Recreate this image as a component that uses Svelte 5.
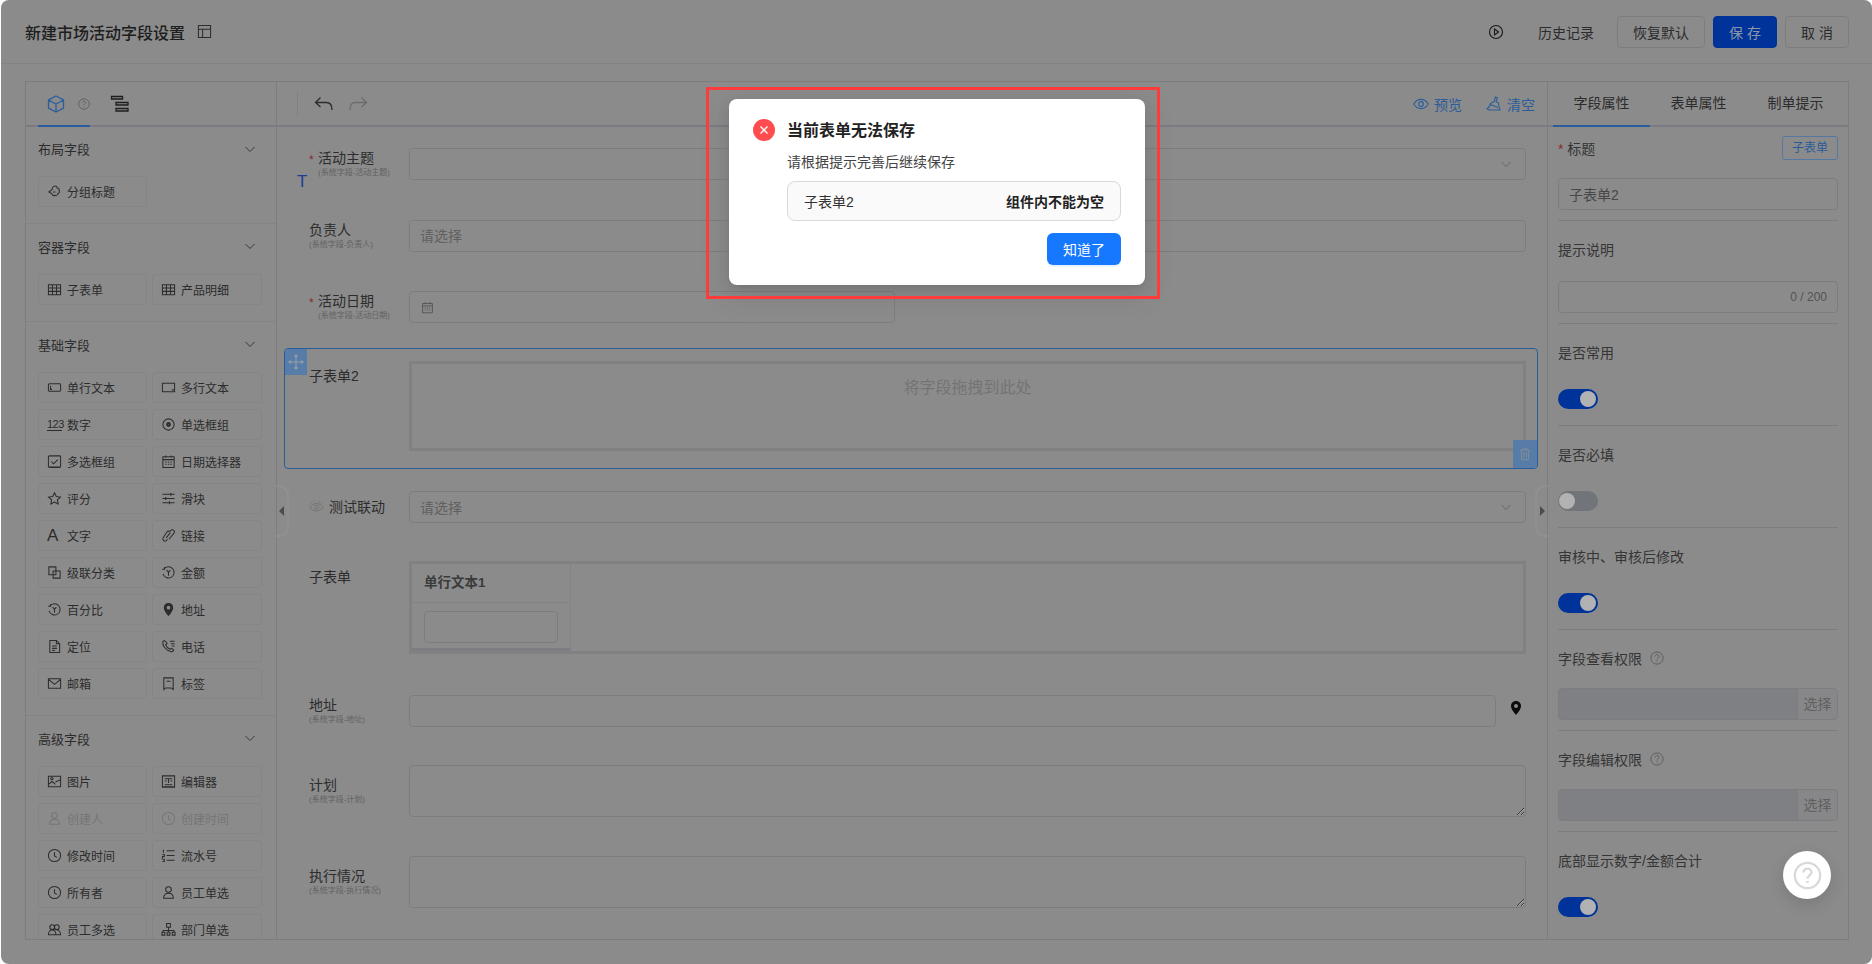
<script>
  const icons = {
    group: 'M8 2.500c1.600-.8 3 .3 2.800 1.800 1.600-.2 2.800 1.200 2 2.700 1 1.200.4 2.900-1.200 3 .1 1.700-1.500 2.800-3 2-1.300 1-2.800.3-3-1.200L2 8.500l3.500-2.700C5.400 4 6.700 2.500 8 2.500zM6.500 8.500h2.500',
    table: 'M1.500 3h13v10.500h-13zM1.500 6.500h13M1.500 10h13M5.800 3v10.500M10.200 3v10.500',
    line: 'M2.500 4h11a1 1 0 0 1 1 1v6a1 1 0 0 1-1 1h-11a1 1 0 0 1-1-1V5a1 1 0 0 1 1-1zM3.800 6v4h1.500',
    multi: 'M1.500 3.500h13v9h-13zM11.500 10.500h1.500v1',
    radio: 'M8 2a6 6 0 1 0 0 12A6 6 0 0 0 8 2zM8 6a2 2 0 1 0 0 4 2 2 0 0 0 0-4z M8 7a1 1 0 1 0 0 2 1 1 0 0 0 0-2z',
    check: 'M2.500 2h11a1 1 0 0 1 1 1v10a1 1 0 0 1-1 1h-11a1 1 0 0 1-1-1V3a1 1 0 0 1 1-1zM4.500 8l2.500 2.500 4.500-4.500M1.500 14.500h13',
    date: 'M2 3h12v11.500H2zM2 6h12M5 1.500V4M11 1.500V4M4.500 8.500h1.500M7.300 8.500h1.500M10 8.500h1.500M4.500 11h1.500M7.300 11h1.500M10 11h1.500',
    star: 'M8 1.800l1.900 4 4.400.6-3.200 3 .8 4.400L8 11.700l-3.900 2.100.8-4.400-3.200-3 4.400-.6z',
    slider: 'M1.500 3.500h13M1.500 8h13M1.500 12.500h13M10.500 2v3M5 6.500v3M9 11v3',
    link: 'M9.500 3.500l1.200-1.200a2.300 2.300 0 0 1 3.200 3.200L8.500 12M6.500 4L2.300 10.500a2.300 2.300 0 0 0 3.400 3L7 12M6.500 4a2 2 0 0 1 3 0M5.500 10.500L10 5',
    cascade: 'M2 2h7.500v8.500H2zM6.500 6.500H14V14H6.500z',
    money: 'M3.200 4.300A6 6 0 1 1 2.200 9.500M1.200 4.500h2.600V2M6 5.500L8 7.800l2-2.300M8 7.800v3.700',
    pin: 'M8 1C5 1 3 3.200 3 6c0 3.500 5 9 5 9s5-5.500 5-9c0-2.800-2-5-5-5zm0 3a2 2 0 1 1 0 4 2 2 0 0 1 0-4z',
    doc: 'M3 1.500h7l3.500 3.500v9.500H3zM10 1.500V5h3.500M5.500 7.500h5M5.500 10h5M5.500 12.300h3',
    phone: 'M2 2.500c-1 4 3 10 9 11 1.500.200 2.300-1 2.500-2L11 10l-1.500 1C7.500 10 5.500 7.500 5 6l1.500-1.500L4 1.800c-1 0-1.800 0-2 .7zM9.500 2.500h5M10.500 5h4M11.500 7.500h3',
    mail: 'M1.500 3h13v10h-13zM1.500 3.500L8 9l6.500-5.500',
    tag: 'M3 2h10v12.500l-2-1.800H5l-2 1.800zM6 5.500h4',
    image: 'M1.500 2.500h13v11h-13zM1.500 11l4-3 3.500 3M9 8.500l5.500-2.500M4 5a1.200 1.200 0 1 0 2.400 0A1.200 1.200 0 0 0 4 5z',
    editor: 'M1.500 2h13v12h-13zM4 5h8M8 5v4.500M4 7.500h2M10 7.500h2M4 11.500h8M1.500 13.500h13',
    user: 'M8 1.800a3 3 0 1 0 0 6 3 3 0 0 0 0-6zM2.800 14.200c0-3.300 2.200-5.500 5.200-5.500s5.200 2.200 5.200 5.500z',
    clock: 'M8 1.500a6.500 6.500 0 1 0 0 13 6.500 6.500 0 0 0 0-13zM8 4.500V8.500l2.500 1.500',
    list: 'M6 3h8.500M6 8h8.500M6 13h8.500M2.500 1.800V5M1.500 7h2v2h-2v2.500M1.500 12h2v2.500h-2',
    users: 'M5.500 3a2.500 2.500 0 1 0 0 5 2.500 2.500 0 0 0 0-5zM10.500 3a2.500 2.500 0 1 0 0 5 2.500 2.500 0 0 0 0-5zM1.500 13.500c0-3 1.800-5 4-5s4 2 4 5zM6.500 13.500h8c0-3-1.800-5-4-5',
    org: 'M6 1.500h4v4H6zM8 5.500V9M2 9h12M2 9v2M14 9v2M8 9v2M1 11h3v3H1zM6.500 11h3v3h-3zM12 11h3v3h-3z'
  }

  const sections = [
    { title: '布局字段', fields: [{ t: '分组标题', i: 'group' }] },
    { title: '容器字段', fields: [{ t: '子表单', i: 'table' }, { t: '产品明细', i: 'table' }] },
    {
      title: '基础字段',
      fields: [
        { t: '单行文本', i: 'line' }, { t: '多行文本', i: 'multi' },
        { t: '数字', label: '123' }, { t: '单选框组', i: 'radio' },
        { t: '多选框组', i: 'check' }, { t: '日期选择器', i: 'date' },
        { t: '评分', i: 'star' }, { t: '滑块', i: 'slider' },
        { t: '文字', label: 'A' }, { t: '链接', i: 'link' },
        { t: '级联分类', i: 'cascade' }, { t: '金额', i: 'money' },
        { t: '百分比', i: 'money' }, { t: '地址', i: 'pin', solid: true },
        { t: '定位', i: 'doc' }, { t: '电话', i: 'phone' },
        { t: '邮箱', i: 'mail' }, { t: '标签', i: 'tag' }
      ]
    },
    {
      title: '高级字段',
      fields: [
        { t: '图片', i: 'image' }, { t: '编辑器', i: 'editor' },
        { t: '创建人', i: 'user', off: true }, { t: '创建时间', i: 'clock', off: true },
        { t: '修改时间', i: 'clock' }, { t: '流水号', i: 'list' },
        { t: '所有者', i: 'clock' }, { t: '员工单选', i: 'user' },
        { t: '员工多选', i: 'users' }, { t: '部门单选', i: 'org' }
      ]
    }
  ]
</script>

{#snippet chevron()}
  <svg class="chev" viewBox="0 0 12 12"><path d="M1.500 4l4.500 4.500L10.500 4" /></svg>
{/snippet}

{#snippet help(cls)}
  <svg class={cls} viewBox="0 0 16 16"><circle cx="8" cy="8" r="7" /><path d="M5.800 6.300c0-1.300 1-2.100 2.200-2.100s2.200.8 2.200 2c0 1.700-2.200 1.700-2.200 3.500M8 11v1.200" /></svg>
{/snippet}

<div class="page">
  <header class="top">
    <h1>新建市场活动字段设置</h1>
    <svg class="ic layout" viewBox="0 0 16 16"><path d="M1.500 1.500h13v13h-13zM1.500 5.500h13M6 5.500v9" /></svg>
    <div class="actions">
      <svg class="ic play" viewBox="0 0 16 16"><circle cx="8" cy="8" r="6.500" /><path d="M6.500 5l4 3-4 3z" /></svg>
      <span class="history">历史记录</span>
      <button class="btn wide">恢复默认</button>
      <button class="btn primary">保 存</button>
      <button class="btn">取 消</button>
    </div>
  </header>

  <div class="workspace">
    <aside class="left">
      <div class="left-tabs">
        <span class="cube-tab">
          <svg class="cube" viewBox="0 0 18 18"><path d="M9 1l7.500 4v8L9 17l-7.500-4V5zM1.500 5L9 9l7.500-4M9 9v8" /></svg>
          {@render help('q-small')}
        </span>
        <svg class="tree" viewBox="0 0 20 18"><path d="M1.500 1.500h11v2.500h-11zM6 7.500h12V10H6zM6 13.500h12V16H6z" /></svg>
      </div>
      {#each sections as s}
        <section class="group">
          <div class="group-head"><span>{s.title}</span>{@render chevron()}</div>
          <div class="chips">
            {#each s.fields as f}
              <div class="chip" class:off={f.off}>
                {#if f.label}
                  <span class="glyph" class:big={f.label === 'A'}>{f.label}</span>
                {:else}
                  <svg class="ic chip-ic" class:solid={f.solid} viewBox="0 0 16 16"><path d={icons[f.i]} /></svg>
                {/if}
                <span>{f.t}</span>
              </div>
            {/each}
          </div>
        </section>
      {/each}
    </aside>

    <main class="center">
      <div class="toolbar">
        <span class="sep"></span>
        <svg class="ic undo" viewBox="0 0 20 16"><path d="M6.500 1.500L1.500 6.500l5 4.500M1.500 6.500h11c3.500 0 5.500 2 5.500 7.500" /></svg>
        <svg class="ic redo" viewBox="0 0 20 16"><path d="M13.500 1.500l5 5-5 4.500M18.500 6.500h-11C4 6.500 2 8.500 2 14" /></svg>
        <span class="tool-link first">
          <svg class="ic" viewBox="0 0 16 16"><path d="M.8 8C2.500 5 5 3.400 8 3.400S13.500 5 15.200 8c-1.700 3-4.200 4.600-7.200 4.600S2.500 11 .8 8zM8 5.600a2.400 2.400 0 1 0 0 4.800 2.400 2.400 0 0 0 0-4.800z" /></svg>
          预览
        </span>
        <span class="tool-link">
          <svg class="ic" viewBox="0 0 16 16"><path d="M9.500 1l2 1-1.500 3.500 2.500 1.500.5 3.500c.2 1.500.5 2.500 1 3.500H4c-1.500-.2-2.800-.8-3-1.500 1.800-.5 2.600-2.200 3.500-5L7 6l1-.2zM4.500 8.500l7.500 3" /></svg>
          清空
        </span>
      </div>

      <div class="form">
        <div class="row r1">
          <span class="stray">T</span>
          <div class="lab req"><b>活动主题</b><small>(系统字段-活动主题)</small></div>
          <div class="ctl select">{@render chevron()}</div>
        </div>
        <div class="row r2">
          <div class="lab"><b>负责人</b><small>(系统字段-负责人)</small></div>
          <input class="ctl" placeholder="请选择" />
        </div>
        <div class="row r3">
          <div class="lab req"><b>活动日期</b><small>(系统字段-活动日期)</small></div>
          <div class="ctl date"><svg class="ic date-ic" viewBox="0 0 16 16"><path d={icons.date} /></svg></div>
        </div>

        <div class="row picked">
          <span class="handle move">
            <svg class="ic" viewBox="0 0 16 16"><path d="M8 1v14M1 8h14M6.500 2.500L8 1l1.500 1.500M6.500 13.500L8 15l1.500-1.500M2.500 6.500L1 8l1.500 1.500M13.500 6.500L15 8l-1.500 1.500" /></svg>
          </span>
          <div class="lab plain"><b>子表单2</b></div>
          <div class="dropzone">将字段拖拽到此处</div>
          <span class="handle trash">
            <svg class="ic" viewBox="0 0 16 16"><path d="M2.500 3.500h11M6 3.500V1.500h4v2M3.500 3.500l.7 11h7.600l.7-11M6.500 6v6M9.500 6v6" /></svg>
          </span>
        </div>

        <div class="row r5">
          <div class="lab plain eye">
            <svg class="ic eye-ic" viewBox="0 0 18 14"><path d="M1 8c2-3 4.800-4.500 8-4.500S15 5 17 8c-2 2.800-4.800 4.200-8 4.200S3 10.800 1 8zM9 5.800a2.200 2.200 0 1 0 0 4.400 2.200 2.200 0 0 0 0-4.400zM3 3.500L2 2M6 2.200L5.500 .8M12 2.200l.5-1.400M15 3.500L16 2" /></svg>
            <b>测试联动</b>
          </div>
          <div class="ctl select holder">请选择{@render chevron()}</div>
        </div>

        <div class="row r6">
          <div class="lab plain"><b>子表单</b></div>
          <div class="subtable">
            <div class="col">
              <div class="col-head">单行文本1</div>
              <div class="col-cell"><input class="ctl" /></div>
            </div>
          </div>
        </div>

        <div class="row r7">
          <div class="lab"><b>地址</b><small>(系统字段-地址)</small></div>
          <input class="ctl" />
          <svg class="ic addr solid" viewBox="0 0 16 16"><path d={icons.pin} /></svg>
        </div>
        <div class="row r8">
          <div class="lab area"><b>计划</b><small>(系统字段-计划)</small></div>
          <textarea class="ctl"></textarea>
        </div>
        <div class="row">
          <div class="lab area"><b>执行情况</b><small>(系统字段-执行情况)</small></div>
          <textarea class="ctl"></textarea>
        </div>
      </div>

      <span class="fold fold-l"><i></i></span>
      <span class="fold fold-r"><i></i></span>
    </main>

    <aside class="right">
      <div class="right-tabs">
        <span class="on">字段属性</span>
        <span>表单属性</span>
        <span>制单提示</span>
      </div>
      <div class="prop first">
        <div class="prop-label between">
          <span><em>*</em> 标题</span>
          <span class="tag">子表单</span>
        </div>
        <input class="ctl" value="子表单2" />
      </div>
      <div class="prop">
        <div class="prop-label">提示说明</div>
        <div class="ctl counter">0 / 200</div>
      </div>
      <div class="prop"><div class="prop-label">是否常用</div><span class="switch on"></span></div>
      <div class="prop"><div class="prop-label">是否必填</div><span class="switch"></span></div>
      <div class="prop"><div class="prop-label">审核中、审核后修改</div><span class="switch on"></span></div>
      <div class="prop perm">
        <div class="prop-label">字段查看权限 {@render help('q-mid')}</div>
        <div class="picker"><span></span><b>选择</b></div>
      </div>
      <div class="prop perm">
        <div class="prop-label">字段编辑权限 {@render help('q-mid')}</div>
        <div class="picker"><span></span><b>选择</b></div>
      </div>
      <div class="prop last"><div class="prop-label">底部显示数字/金额合计</div><span class="switch on"></span></div>
    </aside>
  </div>

  <div class="mask">
    <div class="modal">
      <span class="err">
        <svg viewBox="0 0 22 22"><path d="M7.500 7.500l7 7M14.500 7.500l-7 7" /></svg>
      </span>
      <div class="modal-body">
        <h2>当前表单无法保存</h2>
        <p>请根据提示完善后继续保存</p>
        <div class="issue"><span>子表单2</span><b>组件内不能为空</b></div>
        <div class="modal-foot"><button class="ok">知道了</button></div>
      </div>
    </div>
    <div class="annot"></div>
    <div class="float-help">{@render help('q-big')}</div>
  </div>
</div>

<style>
  :global(body) {
    margin: 0;
    background: #fff;
  }
  .page {
    position: relative;
    height: 964px;
    margin-left: 1px;
    display: flex;
    flex-direction: column;
    overflow: hidden;
    border-radius: 8px;
    background: #c8c8c8;
    color: #3f3f3f;
    font-family: 'Liberation Sans', 'Noto Sans CJK SC', sans-serif;
    font-size: 14px;
  }
  button,
  input,
  textarea {
    font-family: inherit;
  }
  .ic {
    fill: none;
    stroke: currentColor;
    stroke-width: 1.1;
    flex: none;
  }
  .solid {
    fill: currentColor;
    fill-rule: evenodd;
    stroke: none;
  }

  .top {
    height: 63px;
    flex: none;
    display: flex;
    align-items: center;
    padding: 0 23px 0 24px;
    border-bottom: 1px solid #bcbcbc;
  }
  h1 {
    margin: 0;
    font-size: 16px;
    font-weight: 500;
    color: #2c2c2c;
  }
  .layout {
    width: 15px;
    height: 15px;
    margin-left: 12px;
  }
  .actions {
    margin-left: auto;
    display: flex;
    align-items: center;
    gap: 8px;
  }
  .play {
    width: 16px;
    height: 16px;
    margin-right: 26px;
    color: #222;
  }
  .history {
    margin-right: 15px;
  }
  .btn {
    width: 64px;
    height: 32px;
    border: 1px solid #b3b3b3;
    border-radius: 4px;
    background: transparent;
    color: #3f3f3f;
    font-size: 14px;
    padding: 0;
  }
  .btn.wide {
    width: 88px;
  }
  .btn.primary {
    background: #004adc;
    border-color: #004adc;
    color: #c8d8f0;
  }

  .workspace {
    flex: 1;
    min-height: 0;
    display: flex;
    margin: 17px 23px 24px 24px;
    border: 1px solid #b3b3b3;
  }
  .left {
    width: 250px;
    flex: none;
    overflow: hidden;
    border-right: 1px solid #b3b3b3;
  }
  .left-tabs {
    height: 43px;
    display: flex;
    align-items: center;
    padding-left: 12px;
    border-bottom: 2px solid #b0b0be;
    position: relative;
  }
  .cube-tab {
    width: 52px;
    height: 45px;
    margin-bottom: -2px;
    display: flex;
    align-items: center;
    gap: 13px;
    padding-left: 9px;
    box-sizing: border-box;
    border-bottom: 2px solid #3c86e0;
    flex: none;
  }
  .cube {
    width: 18px;
    height: 18px;
    flex: none;
    fill: none;
    stroke: #3c86e0;
    stroke-width: 1.3;
  }
  .q-small {
    width: 12px;
    height: 12px;
    flex: none;
    fill: none;
    stroke: #7d7d7d;
    stroke-width: 1;
  }
  .tree {
    width: 20px;
    height: 18px;
    margin-left: 20px;
    fill: none;
    stroke: #2a2a2a;
    stroke-width: 1.3;
  }
  .group {
    padding: 0 13px 16px 12px;
    border-bottom: 1px solid #bdbdbd;
  }
  .group:last-child {
    border-bottom: 0;
  }
  .group-head {
    height: 43px;
    margin-bottom: 6px;
    display: flex;
    align-items: center;
    justify-content: space-between;
    padding-right: 7px;
    font-size: 13px;
  }
  .group:not(:first-of-type) .group-head {
    height: 44px;
  }
  .chev {
    width: 12px;
    height: 12px;
    fill: none;
    stroke: currentColor;
    stroke-width: 0.9;
    flex: none;
  }
  .chips {
    display: grid;
    grid-template-columns: 109px 110px;
    gap: 6px 5px;
  }
  .chip {
    height: 31px;
    box-sizing: border-box;
    border: 1px solid #bfbfbf;
    border-radius: 3px;
    display: flex;
    align-items: center;
    gap: 5px;
    padding-left: 8px;
    font-size: 12px;
  }
  .chip.off {
    color: #a8a8a8;
  }
  .chip-ic {
    width: 15px;
    height: 15px;
    stroke-width: 1.1;
  }
  .glyph {
    width: 15px;
    flex: none;
    font-size: 11px;
    font-family: 'Liberation Sans Narrow', 'Liberation Sans', sans-serif;
    letter-spacing: -0.5px;
    border-bottom: 1px solid currentColor;
    line-height: 12px;
  }
  .glyph.big {
    border-bottom: 0;
    font-size: 17px;
    letter-spacing: 0;
    line-height: 16px;
  }

  .center {
    flex: 1;
    min-width: 0;
    position: relative;
  }
  .toolbar {
    height: 43px;
    display: flex;
    align-items: center;
    padding: 0 12px 0 20px;
    border-bottom: 2px solid #b0b0be;
  }
  .sep {
    width: 1px;
    height: 25px;
    background: #b8b8b8;
    margin-right: 16px;
  }
  .undo,
  .redo {
    width: 20px;
    height: 16px;
    stroke-width: 1.3;
  }
  .redo {
    margin-left: 14px;
    color: #9a9a9a;
  }
  .tool-link {
    display: flex;
    align-items: center;
    gap: 5px;
    margin-left: 24px;
    font-size: 14px;
    color: #3c86dd;
  }
  .tool-link.first {
    margin-left: auto;
  }
  .tool-link .ic {
    width: 16px;
    height: 16px;
  }

  .form {
    padding: 21px 21px 0 32px;
  }
  .row {
    display: flex;
    margin-bottom: 39px;
    position: relative;
  }
  .r1 { margin-bottom: 40px; }
  .r3 { margin-bottom: 25px; }
  .r5 { margin-bottom: 38px; }
  .r6 { margin-bottom: 41px; }
  .r7 { margin-bottom: 38px; }
  .stray {
    position: absolute;
    left: -12px;
    top: 25px;
    font-size: 17px;
    line-height: 17px;
    color: #2a5ad8;
  }
  .lab {
    width: 100px;
    box-sizing: border-box;
    flex: none;
    padding-top: 1px;
    display: flex;
    flex-direction: column;
    line-height: 18px;
    position: relative;
  }
  .lab b,
  .lab.plain b {
    font-weight: 400;
  }
  .lab small {
    font-size: 8px;
    line-height: 8px;
    margin-top: 2px;
    color: #8c8c8c;
  }
  .lab.req {
    padding-left: 9px;
  }
  .lab.req::before {
    content: '*';
    position: absolute;
    left: 0;
    top: 3px;
    font-size: 12px;
    color: #c0403f;
  }
  .lab.area {
    padding-top: 11px;
  }
  .lab.plain {
    padding-top: 7px;
  }
  .ctl {
    flex: 1;
    min-width: 0;
    width: 100%;
    height: 32px;
    box-sizing: border-box;
    border: 1px solid #b3b3b3;
    border-radius: 4px;
    background: transparent;
    padding: 0 10px;
    font-size: 14px;
    color: #666;
    outline: 0;
    display: block;
  }
  .ctl::placeholder {
    color: #8a8a8a;
  }
  .select {
    display: flex;
    align-items: center;
    justify-content: flex-end;
    color: #8a8a8a;
    padding-right: 13px;
  }
  .select.holder {
    justify-content: space-between;
  }
  .date {
    flex: none;
    width: 486px;
    display: flex;
    align-items: center;
    color: #777;
  }
  .date-ic {
    width: 13px;
    height: 13px;
    margin-left: 1px;
  }
  textarea.ctl {
    height: 52px;
    resize: vertical;
  }

  .picked {
    margin: 0 -12px 22px -25px;
    padding: 12px 11px 17px 24px;
    border: 1px solid #3c86dd;
    border-radius: 4px;
  }
  .picked .lab {
    padding-top: 6px;
  }
  .dropzone {
    flex: 1;
    height: 90px;
    box-sizing: border-box;
    border: 3px solid #b9b9b9;
    padding-top: 13px;
    text-align: center;
    font-size: 16px;
    line-height: 22px;
    color: #a6a6a6;
  }
  .handle {
    position: absolute;
    display: flex;
    align-items: center;
    justify-content: center;
    background: #7db2ef;
    color: #dbe6f2;
  }
  .handle .ic {
    width: 16px;
    height: 16px;
  }
  .move {
    left: 0;
    top: 0;
    width: 22px;
    height: 26px;
    border-top-left-radius: 3px;
  }
  .trash {
    right: 0;
    bottom: 0;
    width: 24px;
    height: 28px;
    border-bottom-right-radius: 3px;
    color: #c0c8d4;
  }
  .trash .ic {
    width: 14px;
    height: 14px;
  }
  .eye {
    flex-direction: row;
    align-items: flex-start;
    gap: 5px;
  }
  .eye-ic {
    width: 15px;
    height: 13px;
    margin-top: 2px;
    color: #a0a0a0;
  }

  .subtable {
    flex: 1;
    height: 93px;
    box-sizing: border-box;
    border: 3px solid #b9b9b9;
  }
  .col {
    width: 159px;
    height: 100%;
    box-sizing: border-box;
    border-right: 1px solid #bcbcbc;
    border-bottom: 3px solid #b4b4bc;
  }
  .col-head {
    height: 39px;
    box-sizing: border-box;
    border-bottom: 1px solid #bcbcbc;
    padding-left: 12px;
    line-height: 38px;
    font-weight: 700;
    font-size: 13.500px;
    color: #555;
  }
  .col-cell {
    padding: 8px 12px;
  }
  .r7 .addr {
    width: 16px;
    height: 16px;
    margin: 5px 2px 0 12px;
    color: #111;
  }

  .fold {
    position: absolute;
    top: 403px;
    width: 13px;
    height: 52px;
    box-sizing: border-box;
    border: 2px solid #cfcfcf;
    display: flex;
    align-items: center;
    justify-content: center;
  }
  .fold i {
    width: 0;
    height: 0;
    border-top: 5px solid transparent;
    border-bottom: 5px solid transparent;
  }
  .fold-l {
    left: -1px;
    border-left: 0;
    border-radius: 0 10px 10px 0;
  }
  .fold-l i {
    border-right: 5px solid #6e6e6e;
  }
  .fold-r {
    right: -1px;
    border-right: 0;
    border-radius: 10px 0 0 10px;
  }
  .fold-r i {
    border-left: 5px solid #6e6e6e;
  }

  .right {
    width: 300px;
    flex: none;
    overflow: hidden;
    border-left: 1px solid #b3b3b3;
  }
  .right-tabs {
    height: 43px;
    display: flex;
    padding: 0 5px;
    border-bottom: 2px solid #b0b0be;
  }
  .right-tabs span {
    width: 97px;
    height: 45px;
    box-sizing: border-box;
    text-align: center;
    line-height: 42px;
    font-size: 14px;
    flex: none;
  }
  .right-tabs .on {
    border-bottom: 2px solid #3c86e0;
  }
  .prop {
    margin: 0 10px;
    padding: 18px 0 10px;
    border-bottom: 1px solid #b3b3b3;
  }
  .prop.first {
    padding-top: 10px;
  }
  .prop.last {
    border-bottom: 0;
  }
  .prop-label {
    height: 22px;
    box-sizing: border-box;
    padding-bottom: 2px;
    margin-bottom: 20px;
    display: flex;
    align-items: center;
    gap: 5px;
    color: #4c4c4c;
  }
  .prop.perm .prop-label {
    margin-bottom: 18px;
  }
  .prop-label.between {
    height: 24px;
    margin-bottom: 17px;
    justify-content: space-between;
  }
  .prop-label em {
    font-style: normal;
    color: #c0403f;
  }
  .tag {
    width: 56px;
    height: 24px;
    box-sizing: border-box;
    border: 1px solid #79ade8;
    border-radius: 3px;
    text-align: center;
    font-size: 12px;
    line-height: 22px;
    color: #3c86dd;
  }
  .prop .ctl {
    width: 100%;
    height: 32px;
  }
  .counter {
    line-height: 30px;
    text-align: right;
    font-size: 12px;
    color: #777;
  }
  .switch {
    display: block;
    position: relative;
    width: 40px;
    height: 20px;
    margin: 25px 0 6px;
    border-radius: 10px;
    background: #a3a6ae;
  }
  .switch::after {
    content: '';
    position: absolute;
    left: 1px;
    top: 2px;
    width: 16px;
    height: 16px;
    border-radius: 50%;
    background: #fff;
  }
  .switch.on {
    background: #004adc;
  }
  .switch.on::after {
    left: 22px;
  }
  .q-mid {
    width: 14px;
    height: 14px;
    margin-left: 3px;
    fill: none;
    stroke: #7f7f7f;
    stroke-width: 1;
  }
  .picker {
    height: 32px;
    box-sizing: border-box;
    display: flex;
    border: 1px solid #b3b3b8;
    border-radius: 4px;
    background: #b5b8bc;
  }
  .picker span {
    flex: 1;
  }
  .picker b {
    width: 40px;
    box-sizing: border-box;
    border-left: 1px solid #b3b3b8;
    background: #c2c2c4;
    border-radius: 0 3px 3px 0;
    text-align: center;
    font-weight: 400;
    line-height: 30px;
    color: #8a8a8a;
  }

  .mask {
    position: absolute;
    inset: 0;
    background: rgba(0, 0, 0, 0.3);
  }
  .modal {
    position: absolute;
    left: 728px;
    top: 99px;
    width: 416px;
    box-sizing: border-box;
    padding: 20px 24px;
    display: flex;
    gap: 12px;
    background: #fff;
    border-radius: 8px;
    color: #333;
    box-shadow: 0 6px 16px rgba(0, 0, 0, 0.08), 0 3px 6px -4px rgba(0, 0, 0, 0.12), 0 9px 28px 8px rgba(0, 0, 0, 0.05);
  }
  .err {
    width: 22px;
    height: 22px;
    flex: none;
    border-radius: 50%;
    background: #ff4d4f;
  }
  .err svg {
    display: block;
    fill: none;
    stroke: #fff;
    stroke-width: 1.300;
  }
  .modal-body {
    flex: 1;
  }
  h2 {
    margin: 0;
    font-size: 16px;
    line-height: 24px;
    font-weight: 600;
    color: #222;
  }
  p {
    margin: 7px 0 0;
    line-height: 24px;
    font-size: 14px;
    height: 27px;
    color: #444;
  }
  .issue {
    height: 40px;
    box-sizing: border-box;
    margin-top: 4px;
    padding: 0 16px;
    display: flex;
    align-items: center;
    justify-content: space-between;
    border: 1px solid #d9d9d9;
    border-radius: 8px;
    background: #fafafa;
  }
  .issue b {
    font-weight: 600;
    color: #222;
  }
  .modal-foot {
    margin-top: 12px;
    display: flex;
    justify-content: flex-end;
  }
  .ok {
    width: 74px;
    height: 32px;
    padding: 0;
    border: 0;
    border-radius: 6px;
    background: #1677ff;
    color: #fff;
    font-size: 14px;
    box-shadow: 0 2px 0 rgba(5, 145, 255, 0.1);
  }
  .annot {
    position: absolute;
    left: 705px;
    top: 87px;
    width: 448px;
    height: 206px;
    border: 3px solid #ff3b3b;
    pointer-events: none;
  }
  .float-help {
    position: absolute;
    left: 1782px;
    top: 851px;
    width: 48px;
    height: 48px;
    display: flex;
    align-items: center;
    justify-content: center;
    border-radius: 50%;
    background: #fff;
    box-shadow: 0 6px 16px rgba(0, 0, 0, 0.12);
  }
  .q-big {
    width: 29px;
    height: 29px;
    fill: none;
    stroke: #d9d9d9;
    stroke-width: 1.300;
  }
</style>
